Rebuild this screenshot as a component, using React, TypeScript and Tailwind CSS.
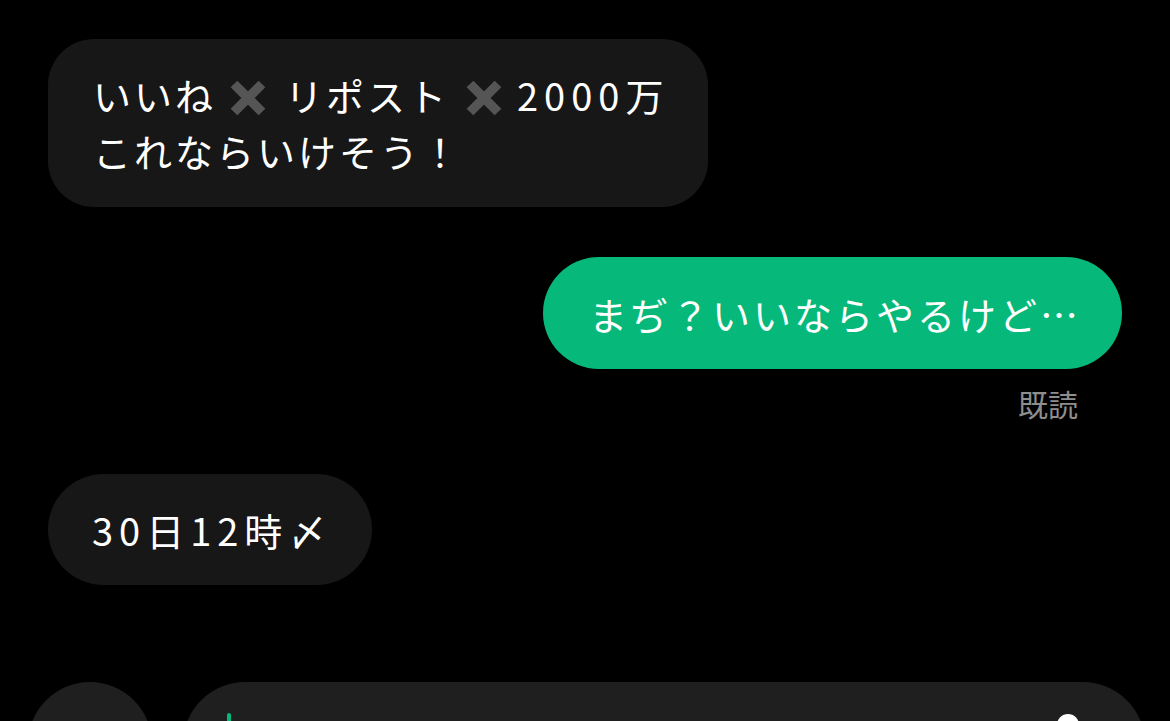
import React from "react";

const Cross = ({ left, right }: { left: string; right: string }) => (
  <svg
    viewBox="0 0 38 38"
    className={`inline-block w-[38px] h-[38px] align-[-6px] ${left} ${right}`}
  >
    <path
      d="M5 5 L33 33 M33 5 L5 33"
      stroke="#555555"
      strokeWidth="9.5"
      strokeLinecap="butt"
    />
  </svg>
);

export default function App() {
  return (
    <div
      className="w-[1170px] h-[721px] bg-black overflow-hidden flex flex-col text-white"
      style={{ fontFamily: '"Noto Sans CJK JP", "Noto Sans", sans-serif' }}
    >
      <div className="flex flex-col px-[48px] pt-[39px]">
        <div className="self-start bg-[#171717] rounded-[46px] pl-[45px] pr-[42px] py-[28px] text-[38px] leading-[56px] tracking-[3px]">
          <div className="whitespace-nowrap">
            いいね
            <Cross left="ml-[13px]" right="mr-[18px]" />
            リポスト
            <Cross left="ml-[16px]" right="mr-[14px]" />
            <span className="tracking-[6px]">2000</span>万
          </div>
          <div>これならいけそう！</div>
        </div>

        <div className="self-end mt-[50px] bg-[#06b97a] rounded-full pl-[46px] pr-[41px] h-[112px] flex items-center text-[38px] tracking-[3px]">
          まぢ？いいならやるけど…
        </div>
        <div className="self-end mr-[44px] mt-[14px] text-[30px] leading-[40px] text-[#8e8e8e]">
          既読
        </div>

        <div className="self-start mt-[51px] bg-[#171717] rounded-full pl-[44px] pr-[40px] h-[111px] flex items-center text-[38px] tracking-[6px]">
          30日12時〆
        </div>
      </div>

      <div className="flex mt-auto h-[39px] items-start">
        <div className="ml-[28px] w-[124px] h-[124px] rounded-full bg-[#1f1f1f] shrink-0" />
        <div className="ml-[31px] w-[962px] h-[124px] rounded-[62px] bg-[#1f1f1f] shrink-0 relative">
          <div className="absolute left-[44px] top-[31px] w-[4px] h-[40px] rounded-full bg-[#06b97a]" />
          <div className="absolute left-[874px] top-[32px] w-[22px] h-[22px] rounded-full bg-white" />
        </div>
      </div>
    </div>
  );
}
